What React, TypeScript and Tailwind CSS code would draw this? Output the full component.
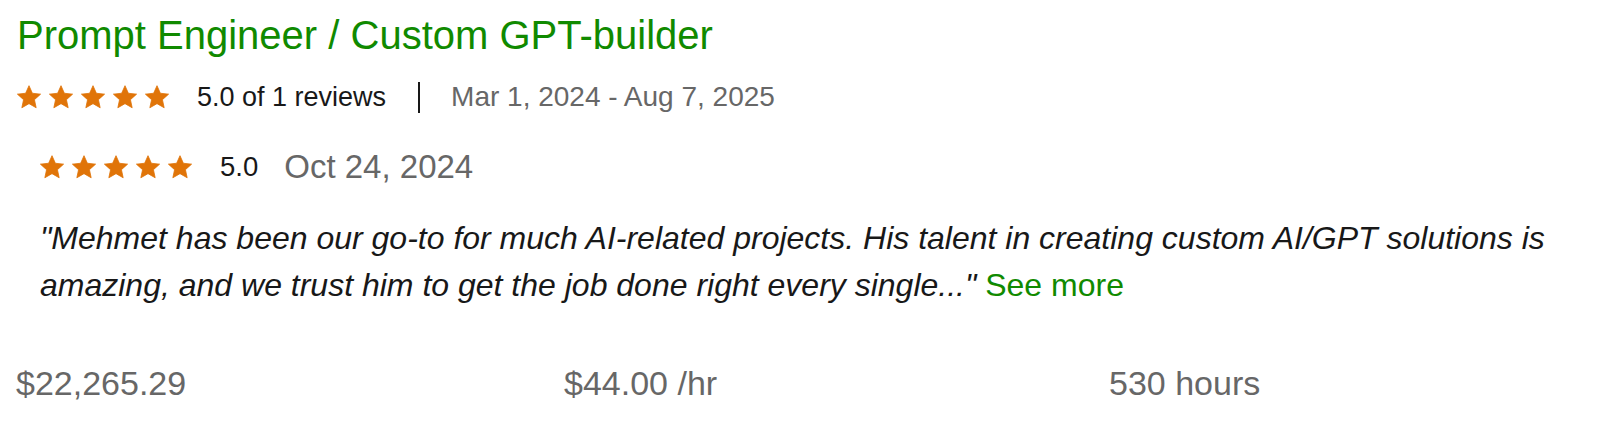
import React from "react";

const starPoints = (() => {
  const cx = 12;
  const cy = 12.9;
  const R = 12.2;
  const r = R * 0.47;
  const pts: string[] = [];
  for (let i = 0; i < 10; i++) {
    const a = ((-90 + i * 36) * Math.PI) / 180;
    const rad = i % 2 === 0 ? R : r;
    pts.push(`${(cx + rad * Math.cos(a)).toFixed(2)},${(cy + rad * Math.sin(a)).toFixed(2)}`);
  }
  return pts.join(" ");
})();

function Star() {
  return (
    <svg width="24" height="24" viewBox="0 0 24 24" className="block shrink-0">
      <polygon points={starPoints} fill="#e07408" stroke="#e07408" strokeWidth="0.8" strokeLinejoin="round" />
    </svg>
  );
}

function Stars() {
  return (
    <div className="flex items-center gap-2">
      <Star />
      <Star />
      <Star />
      <Star />
      <Star />
    </div>
  );
}

export default function App() {
  return (
    <div className="w-[1622px] h-[438px] bg-white px-4 pt-[11px] font-['Liberation_Sans',Arial,sans-serif] text-[#181818]">
      <h2 className="ml-px text-[40px] leading-[48px] text-[#108a00]">
        Prompt Engineer / Custom GPT-builder
      </h2>

      <div className="mt-[22px] flex h-[32px] items-center pl-px">
        <Stars />
        <span className="ml-[28px] text-[27px] leading-[32px] text-[#181818]">5.0 of 1 reviews</span>
        <span className="ml-[32px] h-[31px] w-[2px] bg-[#181818]" />
        <span className="ml-[31px] text-[28px] leading-[32px] text-[#676767]">Mar 1, 2024 - Aug 7, 2025</span>
      </div>

      <div className="pl-6">
        <div className="mt-[36px] flex h-[36px] items-center">
          <Stars />
          <span className="ml-[28px] text-[27.5px] leading-[32px] text-[#181818]">5.0</span>
          <span className="ml-[26px] text-[33px] leading-[36px] text-[#676767]">Oct 24, 2024</span>
        </div>

        <p className="mt-[30px] text-[32px] leading-[47px] italic text-[#181818]">
          "Mehmet has been our go-to for much AI-related projects. His talent in creating custom AI/GPT solutions is
          amazing, and we trust him to get the job done right every single..."{" "}
          <span className="not-italic text-[#108a00]">See more</span>
        </p>
      </div>

      <div className="mt-[55px] grid grid-cols-3 gap-x-12 text-[34px] leading-[38px] text-[#676767]">
        <div>$22,265.29</div>
        <div className="pl-[2px]">$44.00 /hr</div>
        <div className="pl-px">530 hours</div>
      </div>
    </div>
  );
}
